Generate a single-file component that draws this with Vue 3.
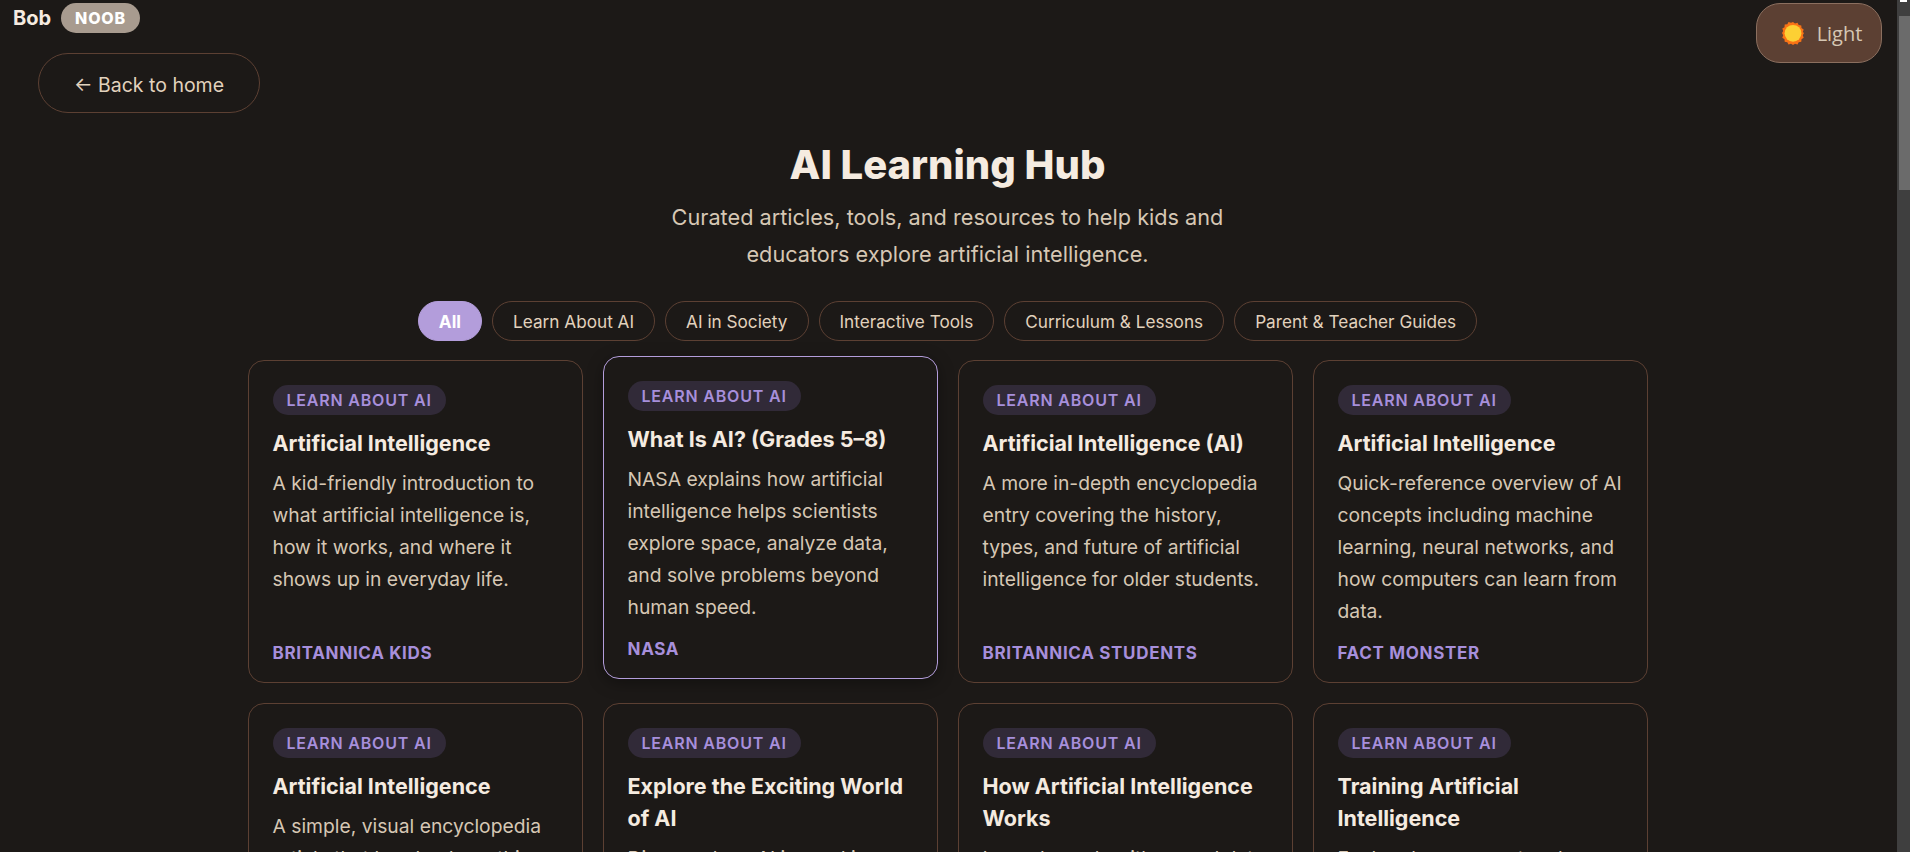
<script setup>
const filters = ['All', 'Learn About AI', 'AI in Society', 'Interactive Tools', 'Curriculum & Lessons', 'Parent & Teacher Guides']

const cards = [
  { title: 'Artificial Intelligence', desc: 'A kid-friendly introduction to what artificial intelligence is, how it works, and where it shows up in everyday life.', source: 'Britannica Kids' },
  { title: 'What Is AI? (Grades 5–8)', desc: 'NASA explains how artificial intelligence helps scientists explore space, analyze data, and solve problems beyond human speed.', source: 'NASA', hover: true },
  { title: 'Artificial Intelligence (AI)', desc: 'A more in-depth encyclopedia entry covering the history, types, and future of artificial intelligence for older students.', source: 'Britannica Students' },
  { title: 'Artificial Intelligence', desc: 'Quick-reference overview of AI concepts including machine learning, neural networks, and how computers can learn from data.', source: 'Fact Monster' },
  { title: 'Artificial Intelligence', desc: 'A simple, visual encyclopedia article that breaks down this big idea for young readers.', source: 'Kiddle' },
  { title: 'Explore the Exciting World of AI', desc: 'Discover how AI is used in games, robots, and science.', source: 'NASA' },
  { title: 'How Artificial Intelligence Works', desc: 'Learn how algorithms and data help machines make decisions.', source: 'Britannica' },
  { title: 'Training Artificial Intelligence', desc: 'Explore how computers learn from examples and data.', source: 'Code.org' },
]
</script>

<template>
  <div class="page">
    <div class="user">
      <span class="user-name">Bob</span>
      <span class="rank">NOOB</span>
    </div>
    <button class="theme-btn">
      <svg class="sun" viewBox="0 0 24 24" width="24" height="24">
        <path fill="#f97316" d="M12 1l2 1.6 2.5-.8 1.2 2.3 2.6.4.2 2.6 2.2 1.4-.9 2.5L23 12l-1.2 2.3.9 2.5-2.2 1.4-.2 2.6-2.6.4-1.2 2.3-2.5-.8L12 24l-2-1.3-2.5.8-1.2-2.3-2.6-.4-.2-2.6-2.2-1.4.9-2.5L1 12l1.2-1.9-.9-2.5 2.2-1.4.2-2.6 2.6-.4 1.2-2.3 2.5.8z"/>
        <circle cx="12" cy="12.3" r="8.4" fill="#fcd034"/>
      </svg>
      <span>Light</span>
    </button>
    <a href="#" class="back">← Back to home</a>

    <header class="hero">
      <h1>AI Learning Hub</h1>
      <p>Curated articles, tools, and resources to help kids and educators explore artificial intelligence.</p>
    </header>

    <div class="filters">
      <button v-for="f in filters" :key="f" class="chip" :class="{ active: f === 'All' }">{{ f }}</button>
    </div>

    <div class="grid">
      <article v-for="(card, i) in cards" :key="i" class="card" :class="{ hover: card.hover }">
        <span class="tag">Learn About AI</span>
        <h3>{{ card.title }}</h3>
        <p>{{ card.desc }}</p>
        <span class="source">{{ card.source }}</span>
      </article>
    </div>
    <div class="scrollbar">
      <div class="arrow"></div>
      <div class="thumb"></div>
    </div>
  </div>
</template>

<style>
html, body {
  margin: 0;
  height: 100%;
  overflow: hidden;
  background: #1c1917;
}
</style>

<style scoped>
.page {
  height: 852px;
  overflow: hidden;
  position: relative;
  background: #1c1917;
  font-family: Inter, Lato, sans-serif;
  color: #d6c7b4;
  box-sizing: border-box;
  padding-right: 15px;
}

.user {
  display: flex;
  align-items: flex-start;
  gap: 10px;
  height: 53px;
  padding: 3px 0 0 13px;
  box-sizing: border-box;
}

.user-name {
  font-size: 20px;
  font-weight: 700;
  line-height: 30px;
  color: #f5ebe0;
}

.rank {
  background: #a89b8f;
  color: #fff;
  font-size: 16px;
  font-weight: 800;
  letter-spacing: 0.05em;
  padding: 6px 14px;
  border-radius: 15px;
  line-height: 18px;
}

.theme-btn {
  position: absolute;
  top: 3px;
  right: 28px;
  width: 126px;
  height: 60px;
  padding: 0 0 0 5px;
  display: flex;
  align-items: center;
  justify-content: center;
  gap: 12px;
  background: #5c4033;
  border: 1px solid #8b6f5f;
  border-radius: 24px;
  color: #d6c7b4;
  font-family: "Open Sans", sans-serif;
  font-size: 20px;
}

.back {
  display: block;
  box-sizing: border-box;
  width: 222px;
  margin-left: 38px;
  text-align: center;
  height: 60px;
  line-height: 62px;
  border: 1px solid #5c4033;
  border-radius: 30px;
  color: #e2d2bd;
  font-size: 19.5px;
  text-decoration: none;
}

.hero {
  text-align: center;
  margin-top: 26px;
}

.hero h1 {
  margin: 0;
  font-size: 40px;
  font-weight: 800;
  color: #f5ebe0;
  line-height: 52px;
}

.hero p {
  margin: 8px auto 0;
  max-width: 600px;
  font-size: 21.7px;
  line-height: 36.5px;
  color: #d6c7b4;
}

.filters {
  display: flex;
  justify-content: center;
  gap: 10px;
  margin-top: 29px;
}

.chip {
  height: 40px;
  padding: 0 20px;
  background: transparent;
  border: 1px solid #5c4033;
  border-radius: 20px;
  color: #e2d2bd;
  font-family: inherit;
  font-size: 17.2px;
}

.chip.active {
  background: #b39ddb;
  border-color: #b39ddb;
  color: #fff;
  font-weight: 700;
}

.grid {
  margin: 19px auto 0;
  display: grid;
  grid-template-columns: repeat(4, 335px);
  grid-auto-rows: 323px;
  gap: 20px 20px;
  justify-content: center;
}

.card {
  box-sizing: border-box;
  display: flex;
  flex-direction: column;
  align-items: flex-start;
  padding: 24px 20px 19px 24px;
  border: 1px solid #5c4033;
  border-radius: 16px;
  background: #1c1917;
}

.card.hover {
  transform: translateY(-4px);
  border-color: #b39ddb;
  box-shadow: 0 4px 16px rgba(0, 0, 0, 0.35);
}

.tag {
  background: #312a38;
  color: #a78fdb;
  font-size: 16px;
  font-weight: 600;
  letter-spacing: 0.05em;
  text-transform: uppercase;
  padding: 5px 14px;
  border-radius: 15px;
  line-height: 20px;
}

.card h3 {
  margin: 12px 0 0;
  font-size: 21.5px;
  font-weight: 700;
  line-height: 32px;
  color: #f5ebe0;
}

.card p {
  margin: 8px 0 0;
  font-size: 19.3px;
  line-height: 32px;
  color: #d6c7b4;
}

.source {
  margin-top: auto;
  font-size: 17px;
  font-weight: 700;
  letter-spacing: 0.04em;
  text-transform: uppercase;
  color: #a78fdb;
}

.scrollbar {
  position: absolute;
  top: 0;
  right: 0;
  width: 13px;
  height: 100%;
  background: #3f3f3f;
}

.arrow {
  position: absolute;
  top: 0;
  left: 3px;
  width: 7px;
  height: 2px;
  background: #fff;
}

.thumb {
  position: absolute;
  top: 16px;
  right: 0;
  width: 11px;
  height: 174px;
  background: #6b6b6b;
}
</style>
